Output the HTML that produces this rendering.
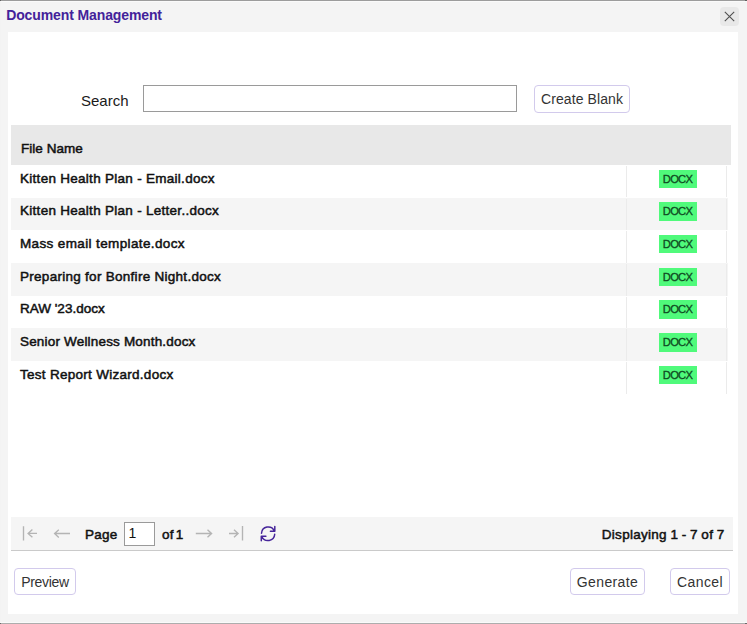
<!DOCTYPE html>
<html>
<head>
<meta charset="utf-8">
<title>Document Management</title>
<style>
html,body{margin:0;padding:0;}
body{width:747px;height:624px;overflow:hidden;background:#f4f4f4;font-family:"Liberation Sans",sans-serif;color:#111;position:relative;}
.abs{position:absolute;white-space:nowrap;}
#win{position:absolute;left:0;top:0;width:747px;height:624px;box-sizing:border-box;background:#f4f4f4;}
#btop{left:0;top:0;width:747px;height:1px;background:linear-gradient(90deg,#606060 0,#606060 1px,#9c9c9c 1px,#9c9c9c 745px,#606060 745px);}
#btop2{left:0;top:1px;width:747px;height:1px;background:#fafafa;}
#bleft{left:0;top:1px;width:1px;height:622px;background:#f3f3f3;}
#bbot{left:0;top:623px;width:747px;height:1px;background:linear-gradient(90deg,#6a6a6a 0,#6a6a6a 1px,#adadad 1px,#adadad 745px,#6a6a6a 745px);}
#bbot2{left:0;top:622px;width:747px;height:1px;background:#fafafa;}
#title{left:6.2px;top:7.2px;font-size:14px;line-height:16px;font-weight:bold;color:#43229a;letter-spacing:-0.115px;}
#close{left:720px;top:7px;width:19px;height:19px;border-radius:4px;background:#e8e8e8;}
#panel{left:8px;top:32px;width:730px;height:582px;background:#fff;}
#lsearch{left:81px;top:92px;font-size:15px;line-height:18px;color:#1a1a1a;}
#isearch{left:143px;top:85px;width:374px;height:27px;box-sizing:border-box;border:1px solid #9a9a9a;background:#fff;}
.btn{box-sizing:border-box;border:1px solid #d2caec;border-radius:4px;background:#fff;font-size:14px;color:#333;text-align:center;}
#bcreate{left:534px;top:85px;width:96px;height:28px;line-height:26px;}
#bpreview{padding-top:1px;left:14px;top:568px;width:62px;height:27px;line-height:25px;}
#bgen{padding-top:1px;left:570px;top:568px;width:75px;height:27px;line-height:25px;}
#bcancel{padding-top:1px;left:670px;top:568px;width:60px;height:27px;line-height:25px;}
#ghead{left:11px;top:125px;width:720px;height:40px;background:#e8e8e8;}
.sb{font-size:13.5px;line-height:16px;font-weight:normal;color:#111;letter-spacing:0.28px;-webkit-text-stroke:0.5px #111;}
#hname{left:21px;top:141px;letter-spacing:0.03px;}
.row{left:11px;width:717px;height:32.7px;}
.row.alt{background:#f5f5f5;}
.row .t{position:absolute;left:9px;top:5.77px;white-space:nowrap;}
.row .c1{position:absolute;left:615px;top:1px;width:1px;bottom:0;background:#ebebeb;}
.row .c2{position:absolute;left:715px;top:1px;width:1px;bottom:0;background:#ebebeb;}
.row .b{position:absolute;left:648px;top:4.9px;width:38px;height:18.4px;background:#50fa7b;color:#0f4a22;font-size:11.2px;line-height:18px;text-align:center;letter-spacing:-0.75px;-webkit-text-stroke:0.3px #0f4a22;text-indent:-1px;}
#tbar{left:11px;top:517px;width:722px;height:33px;background:#f5f5f5;border-bottom:1px solid #cacaca;}
#pg{left:85px;top:527.2px;}
#ipg{left:124px;top:522px;width:31px;height:24px;box-sizing:border-box;border:1px solid #9a9a9a;background:#fff;}
#ipgt{left:128.5px;top:525px;font-size:14px;line-height:16px;color:#111;}
#of{left:162px;top:527.2px;word-spacing:-2.2px;}
#disp{right:22.5px;top:527.2px;word-spacing:-0.5px;}
</style>
</head>
<body>
<div id="win">
<div class="abs" id="btop"></div><div class="abs" id="btop2"></div><div class="abs" id="bleft"></div><div class="abs" id="bbot2"></div><div class="abs" id="bbot"></div>
<div class="abs" id="title">Document Management</div>
<div class="abs" id="close"><svg width="19" height="19" viewBox="0 0 19 19" style="display:block"><path d="M4.8 4.8 L14.2 14.2 M14.2 4.8 L4.8 14.2" stroke="#505050" stroke-width="1.1" fill="none"/></svg></div>
<div class="abs" id="panel"></div>
<div class="abs" id="lsearch">Search</div>
<div class="abs" id="isearch"></div>
<div class="abs btn" id="bcreate"><span id="tcre" style="letter-spacing:0.1px">Create Blank</span></div>
<div class="abs" id="ghead"></div>
<div class="abs sb" id="hname">File Name</div>
<div class="abs row" style="top:164.8px"><span class="t sb" id="r1">Kitten Health Plan - Email.docx</span><i class="c1"></i><i class="c2"></i><span class="b">DOCX</span></div>
<div class="abs row alt" style="top:197.5px"><span class="t sb" id="r2">Kitten Health Plan - Letter..docx</span><i class="c1"></i><i class="c2"></i><span class="b">DOCX</span></div>
<div class="abs row" style="top:230.2px"><span class="t sb" id="r3" style="letter-spacing:0.37px">Mass email template.docx</span><i class="c1"></i><i class="c2"></i><span class="b">DOCX</span></div>
<div class="abs row alt" style="top:262.9px"><span class="t sb" id="r4">Preparing for Bonfire Night.docx</span><i class="c1"></i><i class="c2"></i><span class="b">DOCX</span></div>
<div class="abs row" style="top:295.6px"><span class="t sb" id="r5" style="letter-spacing:0.01px">RAW '23.docx</span><i class="c1"></i><i class="c2"></i><span class="b">DOCX</span></div>
<div class="abs row alt" style="top:328.3px"><span class="t sb" id="r6" style="letter-spacing:0.18px">Senior Wellness Month.docx</span><i class="c1"></i><i class="c2"></i><span class="b">DOCX</span></div>
<div class="abs row" style="top:361px"><span class="t sb" id="r7">Test Report Wizard.docx</span><i class="c1"></i><i class="c2"></i><span class="b">DOCX</span></div>
<div class="abs" id="tbar"></div>
<svg class="abs" id="icons" style="left:11px;top:517px" width="300" height="33" viewBox="11 517 300 33" fill="none" stroke="#b4b4b4" stroke-width="1.35">
<path d="M23.5 526.2V540.5M37 533.4H28.2M32.4 529.6L28.1 533.4L32.4 537.3"/>
<path d="M70 533.5H54.7M58.8 529.8L54.6 533.5L58.8 537.4"/>
<path d="M195.8 533.5H211.4M207.5 529.8L211.6 533.5L207.5 537.3"/>
<path d="M229 533.5H238M234 529.8L238.1 533.5L234 537.3M242.5 526V540.5"/>
<g transform="translate(260.3 525.8)" stroke="#46259a" stroke-width="1.5" stroke-linecap="round" stroke-linejoin="round">
<path d="M1.2 7.4A6.73 6.73 0 0 1 14 5M14.5 0.8V5.4H10.1M14.4 8.5A6.73 6.73 0 0 1 1.6 10.9M1 15V10.4H5.6"/>
</g>
</svg>
<div class="abs sb" id="pg">Page</div>
<div class="abs" id="ipg"></div><div class="abs" id="ipgt">1</div>
<div class="abs sb" id="of">of 1</div>
<div class="abs sb" id="disp">Displaying 1 - 7 of 7</div>
<div class="abs btn" id="bpreview"><span id="tprev" style="letter-spacing:-0.3px">Preview</span></div>
<div class="abs btn" id="bgen"><span id="tgen" style="letter-spacing:0.37px">Generate</span></div>
<div class="abs btn" id="bcancel"><span id="tcan" style="letter-spacing:0.38px">Cancel</span></div>
</div>
</body>
</html>
